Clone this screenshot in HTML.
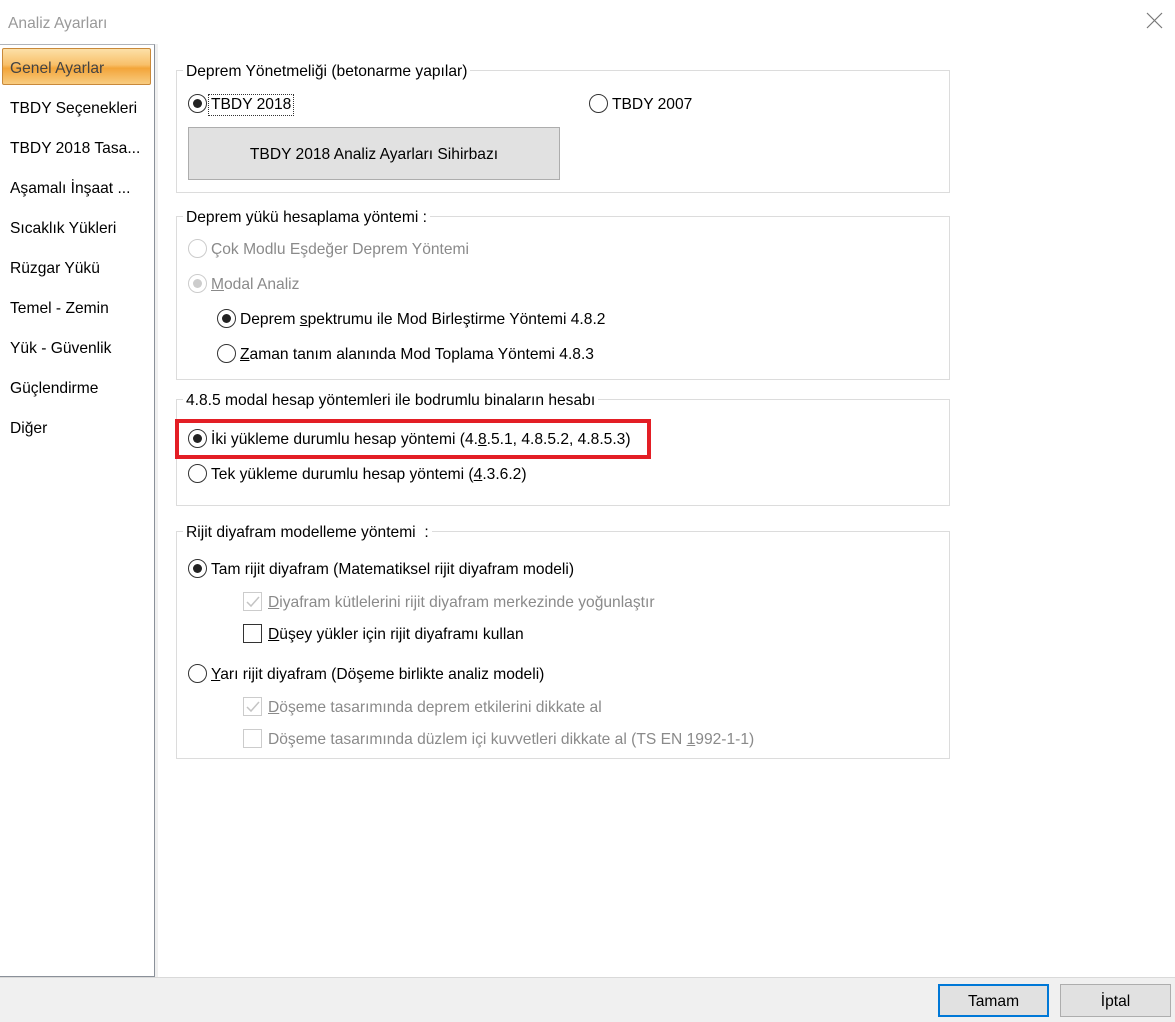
<!DOCTYPE html>
<html><head><meta charset="utf-8"><style>
*{margin:0;padding:0;box-sizing:border-box}
body{width:1175px;height:1022px;background:#fff;font-family:"Liberation Sans",sans-serif;font-size:15.6px;color:#000;position:relative;overflow:hidden}
.a{position:absolute;white-space:nowrap}
.t{line-height:20px;height:20px;margin-top:2px}
.g{position:absolute;border:1px solid #dcdcdc}
.lg{position:absolute;background:#fff;padding:0 3px;line-height:20px;white-space:nowrap;margin-top:2px}
.r{position:absolute;width:19px;height:19px;border:1px solid #333;border-radius:50%;background:#fff}
.r.on::after{content:"";position:absolute;left:4px;top:4px;width:9px;height:9px;border-radius:50%;background:#222}
.r.dis{border-color:#ccc}
.r.dis.on::after{background:#ccc}
.c{position:absolute;width:19px;height:19px;border:1px solid #333;background:#fff}
.c.dis{border-color:#ccc}
.side{position:absolute;left:10px;line-height:20px;margin-top:2px}
u{text-decoration:underline}
</style></head><body>
<div class="a t" style="left:8px;top:12px;color:#999">Analiz Ayarları</div>
<svg class="a" style="left:1146px;top:12px" width="17" height="17"><path d="M1 1L16 16M16 1L1 16" stroke="#777" stroke-width="1.2"/></svg>

<div class="a" style="left:0;top:44px;width:155px;height:933px;border:1px solid #8a9099;border-left:none;border-top-color:#b0b4ba"></div>
<div class="a" style="left:2px;top:48px;width:149px;height:37px;border:1px solid #c9893a;border-radius:2px;background:linear-gradient(#fce0a8 0%,#f8c06a 45%,#f3a53a 55%,#f8cc80 100%)"></div>
<div class="side" style="top:57px;color:#444">Genel Ayarlar</div>
<div class="side" style="top:97px">TBDY Seçenekleri</div>
<div class="side" style="top:137px">TBDY 2018 Tasa...</div>
<div class="side" style="top:177px">Aşamalı İnşaat ...</div>
<div class="side" style="top:217px">Sıcaklık Yükleri</div>
<div class="side" style="top:257px">Rüzgar Yükü</div>
<div class="side" style="top:297px">Temel - Zemin</div>
<div class="side" style="top:337px">Yük - Güvenlik</div>
<div class="side" style="top:377px">Güçlendirme</div>
<div class="side" style="top:417px">Diğer</div>

<div class="a" style="left:155px;top:44px;width:3px;height:934px;background:#f0f0f0"></div>

<div class="g" style="left:176px;top:70px;width:774px;height:123px"></div>
<div class="lg" style="left:183px;top:60px">Deprem Yönetmeliği (betonarme yapılar)</div>
<div class="r on" style="left:188px;top:94px"></div>
<div class="a t" style="left:209px;top:93px;outline:1px dotted #333;padding:0 2px">TBDY 2018</div>
<div class="r" style="left:589px;top:94px"></div>
<div class="a t" style="left:612px;top:93px">TBDY 2007</div>
<div class="a" style="left:188px;top:127px;width:372px;height:53px;background:#e1e1e1;border:1px solid #adadad;text-align:center;line-height:53px">TBDY 2018 Analiz Ayarları Sihirbazı</div>

<div class="g" style="left:176px;top:216px;width:774px;height:164px"></div>
<div class="lg" style="left:183px;top:206px">Deprem yükü hesaplama yöntemi :</div>
<div class="r dis" style="left:188px;top:239px"></div>
<div class="a t" style="left:211px;top:238px;color:#8a8a8a">Çok Modlu Eşdeğer Deprem Yöntemi</div>
<div class="r dis on" style="left:188px;top:274px"></div>
<div class="a t" style="left:211px;top:273px;color:#8a8a8a"><u>M</u>odal Analiz</div>
<div class="r on" style="left:217px;top:309px"></div>
<div class="a t" style="left:240px;top:308px">Deprem <u>s</u>pektrumu ile Mod Birleştirme Yöntemi 4.8.2</div>
<div class="r" style="left:217px;top:344px"></div>
<div class="a t" style="left:240px;top:343px"><u>Z</u>aman tanım alanında Mod Toplama Yöntemi 4.8.3</div>

<div class="g" style="left:176px;top:399px;width:774px;height:107px"></div>
<div class="lg" style="left:183px;top:389px">4.8.5 modal hesap yöntemleri ile bodrumlu binaların hesabı</div>
<div class="a" style="left:175px;top:419px;width:476px;height:40px;border:4px solid #e31e25"></div>
<div class="r on" style="left:188px;top:429px"></div>
<div class="a t" style="left:211px;top:428px">İki yükleme durumlu hesap yöntemi (4.<u>8</u>.5.1, 4.8.5.2, 4.8.5.3)</div>
<div class="r" style="left:188px;top:464px"></div>
<div class="a t" style="left:211px;top:463px">Tek yükleme durumlu hesap yöntemi (<u>4</u>.3.6.2)</div>

<div class="g" style="left:176px;top:531px;width:774px;height:228px"></div>
<div class="lg" style="left:183px;top:521px">Rijit diyafram modelleme yöntemi &nbsp;:</div>
<div class="r on" style="left:188px;top:559px"></div>
<div class="a t" style="left:211px;top:558px">Tam rijit diyafram (Matematiksel rijit diyafram modeli)</div>
<div class="c dis" style="left:243px;top:592px"></div>
<svg class="a" style="left:245px;top:594px" width="16" height="16"><path d="M2 8L6 12L14 3" stroke="#c4c4c4" stroke-width="1.5" fill="none"/></svg>
<div class="a t" style="left:268px;top:591px;color:#8a8a8a"><u>D</u>iyafram kütlelerini rijit diyafram merkezinde yoğunlaştır</div>
<div class="c" style="left:243px;top:624px"></div>
<div class="a t" style="left:268px;top:623px"><u>D</u>üşey yükler için rijit diyaframı kullan</div>
<div class="r" style="left:188px;top:664px"></div>
<div class="a t" style="left:211px;top:663px"><u>Y</u>arı rijit diyafram (Döşeme birlikte analiz modeli)</div>
<div class="c dis" style="left:243px;top:697px"></div>
<svg class="a" style="left:245px;top:699px" width="16" height="16"><path d="M2 8L6 12L14 3" stroke="#c4c4c4" stroke-width="1.5" fill="none"/></svg>
<div class="a t" style="left:268px;top:696px;color:#8a8a8a"><u>D</u>öşeme tasarımında deprem etkilerini dikkate al</div>
<div class="c dis" style="left:243px;top:729px"></div>
<div class="a t" style="left:268px;top:728px;color:#8a8a8a">Döşeme tasarımında düzlem içi kuvvetleri dikkate al (TS EN <u>1</u>992-1-1)</div>

<div class="a" style="left:0;top:977px;width:1175px;height:45px;background:#f0f0f0;border-top:1px solid #d9d9d9"></div>
<div class="a" style="left:938px;top:984px;width:111px;height:33px;background:#e1e1e1;border:2px solid #0078d7;text-align:center;line-height:31px">Tamam</div>
<div class="a" style="left:1060px;top:984px;width:111px;height:33px;background:#e1e1e1;border:1px solid #adadad;text-align:center;line-height:33px">İptal</div>
</body></html>
